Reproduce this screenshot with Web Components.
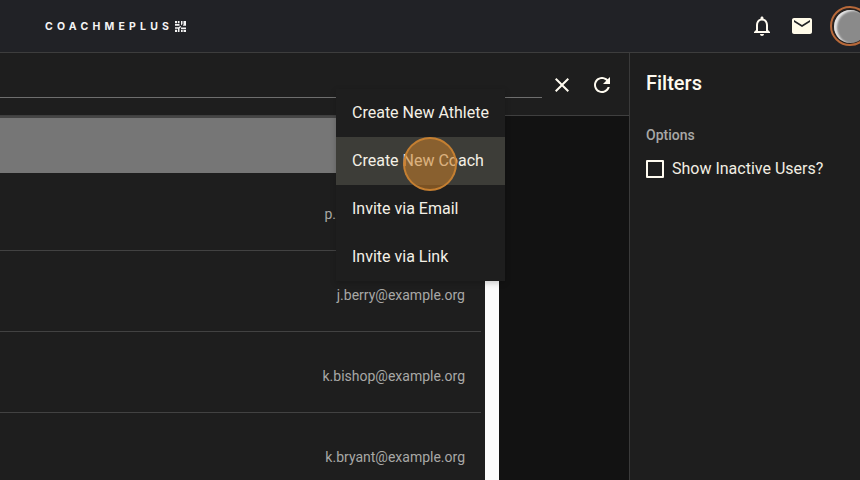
<!DOCTYPE html>
<html>
<head>
<meta charset="utf-8">
<title>Users</title>
<style>
  html, body { margin: 0; height: 100%; overflow: hidden; background: #1e1e1e; }
  body { font-family: Roboto, "Liberation Sans", sans-serif; color: #fffbf0; }
</style>
</head>
<body>
<app-shell></app-shell>
<script>
class AppHeader extends HTMLElement {
  constructor () {
    super()
    this.shadow = this.attachShadow({ mode: 'open' })
  }

  connectedCallback () {
    this.shadow.innerHTML = /* html */`
      <style>
        :host {
          display: flex;
          align-items: center;
          box-sizing: border-box;
          height: 53px;
          padding-left: 45px;
          background: #212226;
          border-bottom: 1px solid #3d3d3d;
        }
        .logo { display: flex; align-items: center; gap: 5px; }
        .word {
          font: 700 10.5px Inter, sans-serif;
          letter-spacing: 4.2px;
          color: #f4f4f4;
          margin-right: -3.5px;
        }
        .icons { margin-left: auto; display: flex; align-items: center; }
        .bell, .mail { margin-right: 16px; display: block; }
        .avatar {
          width: 40px;
          height: 40px;
          flex: none;
          box-sizing: border-box;
          margin-right: -10px;
          border-radius: 50%;
          border: 2.5px solid #b8693a;
          background: #2a2320;
          padding: 1.5px;
        }
        .avatar i {
          display: block;
          height: 100%;
          border-radius: 50%;
          background: #8a8a8a;
          box-shadow: inset 3px 1px 2px #e4e4e4;
        }
      </style>
      <div class="logo">
        <span class="word">COACHMEPLUS</span>
        <svg width="11" height="11" viewBox="0 0 11 11" fill="#f4f4f4">
          <path d="M0 0h2.200v2.200H0zM3 0h1.500v2.200H3zM0 3h4.500v1.700H0zM6 0h1.500v3L6 4.500zM8.500 0H11v4.700H7.800L8.500 3.500zM0 6.300h3.700L5.200 4.900 6.200 5.800 4.500 7.500V11H3V7.800H0zM0 8.800h2.200V11H0zM6 6.500h5v1.700H6zM6 9h1.700v2H6zM8.500 9H11v2H8.500z"/>
        </svg>
      </div>
      <div class="icons">
        <svg class="bell" width="24" height="24" viewBox="0 0 24 24" fill="#fffbf0">
          <path d="M12 22c1.100 0 2-.9 2-2h-4c0 1.100.9 2 2 2zm6-6v-5c0-3.070-1.630-5.640-4.500-6.320V4c0-.83-.67-1.500-1.500-1.500s-1.500.67-1.500 1.500v.68C7.640 5.360 6 7.920 6 11v5l-2 2v1h16v-1l-2-2zm-2 1H8v-6c0-2.480 1.510-4.500 4-4.500s4 2.020 4 4.500v6z"/>
        </svg>
        <svg class="mail" width="24" height="24" viewBox="0 0 24 24" fill="#fffbe9">
          <path d="M20 4H4c-1.100 0-1.990.9-1.990 2L2 18c0 1.100.9 2 2 2h16c1.100 0 2-.9 2-2V6c0-1.100-.9-2-2-2zm0 4l-8 5-8-5V6l8 5 8-5v2z"/>
        </svg>
        <div class="avatar"><i></i></div>
      </div>
    `
  }
}

class UserToolbar extends HTMLElement {
  constructor () {
    super()
    this.shadow = this.attachShadow({ mode: 'open' })
  }

  connectedCallback () {
    this.shadow.innerHTML = /* html */`
      <style>
        :host {
          display: flex;
          align-items: flex-start;
          box-sizing: border-box;
          height: 63px;
          background: #1e1e1e;
          border-bottom: 1px solid #3f3f3f;
        }
        .search {
          width: 542px;
          height: 44px;
          flex: none;
          border-bottom: 1px solid #6e6e6e;
        }
        svg { display: block; margin-top: 20px; }
        .close { margin-left: 8px; }
        .refresh { margin-left: 16px; }
      </style>
      <div class="search"></div>
      <svg class="close" width="24" height="24" viewBox="0 0 24 24" fill="#fffbf0">
        <path d="M19 6.410L17.590 5 12 10.590 6.410 5 5 6.410 10.590 12 5 17.590 6.410 19 12 13.410 17.590 19 19 17.590 13.410 12z"/>
      </svg>
      <svg class="refresh" width="24" height="24" viewBox="0 0 24 24" fill="#fffbf0">
        <path d="M17.650 6.350C16.200 4.900 14.210 4 12 4c-4.420 0-7.990 3.580-7.990 8s3.570 8 7.990 8c3.730 0 6.840-2.550 7.730-6h-2.080c-.82 2.330-3.040 4-5.650 4-3.310 0-6-2.690-6-6s2.690-6 6-6c1.660 0 3.140.69 4.220 1.780L13 11h7V4l-2.350 2.350z"/>
      </svg>
    `
  }
}

class UserRow extends HTMLElement {
  constructor () {
    super()
    this.shadow = this.attachShadow({ mode: 'open' })
  }

  connectedCallback () {
    this.shadow.innerHTML = /* html */`
      <style>
        :host {
          display: flex;
          justify-content: flex-end;
          align-items: center;
          box-sizing: border-box;
          height: 81px;
          padding: 0 20px 0 0;
          background: #1e1e1e;
          font-size: 14px;
          color: #a8a8a6;
          position: relative;
        }
        :host::after {
          content: '';
          position: absolute;
          left: 0;
          right: 4px;
          bottom: 0;
          height: 1px;
          background: #424242;
        }
        span { position: relative; top: 3px; }
      </style>
      <span><slot></slot></span>
    `
  }
}

class UserTable extends HTMLElement {
  constructor () {
    super()
    this.shadow = this.attachShadow({ mode: 'open' })
  }

  connectedCallback () {
    this.shadow.innerHTML = /* html */`
      <style>
        :host {
          display: flex;
          flex: 1;
          min-height: 0;
          overflow: hidden;
          background: #121212;
        }
        .list { width: 485px; flex: none; overflow: hidden; }
        .head {
          height: 57px;
          background: #767676;
          border-top: 2px solid #454545;
          box-sizing: border-box;
        }
        .bar { width: 14px; flex: none; background: #fbfbfb; }
      </style>
      <div class="list">
        <div class="head"></div>
        <user-row style="height:78px;padding-right:149px;padding-bottom:2px">p.</user-row>
        <user-row>j.berry@example.org</user-row>
        <user-row>k.bishop@example.org</user-row>
        <user-row>k.bryant@example.org</user-row>
      </div>
      <div class="bar"></div>
    `
  }
}

class ActionMenu extends HTMLElement {
  constructor () {
    super()
    this.shadow = this.attachShadow({ mode: 'open' })
  }

  connectedCallback () {
    this.shadow.innerHTML = /* html */`
      <style>
        :host {
          position: absolute;
          left: 336px;
          top: 89px;
          width: 169px;
          display: flex;
          flex-direction: column;
          background: #1e1e1e;
          box-shadow: 0 2px 6px rgba(0, 0, 0, .2);
          font-size: 16px;
          color: #f4f0e6;
        }
        div {
          box-sizing: border-box;
          height: 48px;
          display: flex;
          align-items: center;
          padding: 0 16px 2px;
          white-space: nowrap;
        }
        .active { background: #3d3d38; }
      </style>
      <div>Create New Athlete</div>
      <div class="active">Create New Coach</div>
      <div>Invite via Email</div>
      <div>Invite via Link</div>
    `
  }
}

class ClickMarker extends HTMLElement {
  constructor () {
    super()
    this.attachShadow({ mode: 'open' }).innerHTML = /* html */`
      <style>
        :host {
          position: absolute;
          left: 403px;
          top: 137px;
          width: 54px;
          height: 54px;
          box-sizing: border-box;
          border-radius: 50%;
          border: 2px solid rgba(200, 130, 50, .95);
          background: rgba(200, 125, 40, .55);
        }
      </style>
    `
  }
}

class FilterPanel extends HTMLElement {
  constructor () {
    super()
    this.shadow = this.attachShadow({ mode: 'open' })
  }

  connectedCallback () {
    this.shadow.innerHTML = /* html */`
      <style>
        :host {
          display: flex;
          flex-direction: column;
          box-sizing: border-box;
          width: 231px;
          flex: none;
          padding: 17px 16px 0;
          background: #1e1e1e;
          border-left: 1px solid #3a3a3a;
        }
        h2 { margin: 0; font-size: 20px; line-height: 26px; font-weight: 500; }
        h3 {
          margin: 30px 0 0;
          font-size: 14px;
          line-height: 18px;
          font-weight: 500;
          color: #a8a8a6;
        }
        label {
          display: flex;
          align-items: center;
          gap: 8px;
          margin-top: 13px;
          font-size: 16px;
          line-height: 24px;
          color: #f2eee3;
        }
        i {
          width: 14px;
          height: 14px;
          flex: none;
          border: 2px solid #fffbf0;
          border-radius: 1px;
        }
      </style>
      <h2>Filters</h2>
      <h3>Options</h3>
      <label><i></i>Show Inactive Users?</label>
    `
  }
}

class AppShell extends HTMLElement {
  constructor () {
    super()
    this.shadow = this.attachShadow({ mode: 'open' })
  }

  connectedCallback () {
    this.shadow.innerHTML = /* html */`
      <style>
        :host {
          display: flex;
          flex-direction: column;
          height: 100vh;
          overflow: hidden;
          position: relative;
        }
        main { display: flex; flex: 1; min-height: 0; }
        section { display: flex; flex-direction: column; flex: 1; min-width: 0; }
      </style>
      <app-header></app-header>
      <main>
        <section>
          <user-toolbar></user-toolbar>
          <user-table></user-table>
        </section>
        <filter-panel></filter-panel>
      </main>
      <action-menu></action-menu>
      <click-marker></click-marker>
    `
  }
}

customElements.define('app-header', AppHeader)
customElements.define('user-toolbar', UserToolbar)
customElements.define('user-row', UserRow)
customElements.define('user-table', UserTable)
customElements.define('action-menu', ActionMenu)
customElements.define('click-marker', ClickMarker)
customElements.define('filter-panel', FilterPanel)
customElements.define('app-shell', AppShell)
</script>
</body>
</html>
